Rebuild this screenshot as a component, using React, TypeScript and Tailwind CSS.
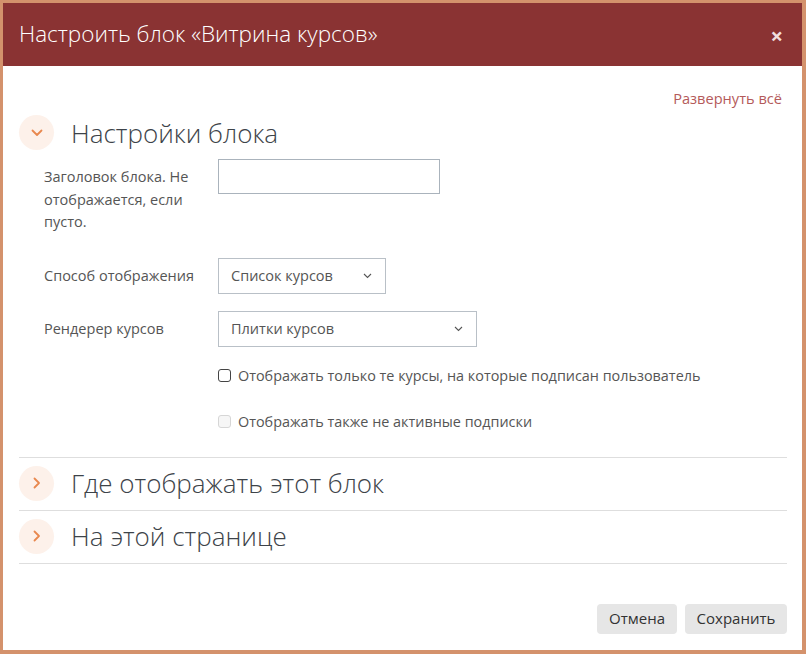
import React from 'react';

const ChevronDown = ({ className = '' }: { className?: string }) => (
  <svg width="12" height="8" viewBox="0 0 12 8" className={className} fill="none">
    <path d="M1.5 1.5 L6 6 L10.5 1.5" stroke="currentColor" strokeWidth="1.8" strokeLinecap="round" strokeLinejoin="round" />
  </svg>
);

const ChevronRight = ({ className = '' }: { className?: string }) => (
  <svg width="8" height="12" viewBox="0 0 8 12" className={className} fill="none">
    <path d="M1.5 1.5 L6 6 L1.5 10.5" stroke="currentColor" strokeWidth="1.8" strokeLinecap="round" strokeLinejoin="round" />
  </svg>
);

const SmallCaret = () => (
  <svg width="9" height="6" viewBox="0 0 9 6" fill="none">
    <path d="M1 1 L4.5 4.5 L8 1" stroke="#555" strokeWidth="1.1" />
  </svg>
);

const SectionHeader = ({ title, open }: { title: string; open?: boolean }) => (
  <div className="flex items-center">
    <div className="w-[35px] h-[35px] rounded-full bg-[#fdf1ea] flex items-center justify-center text-[#e8884f]">
      {open ? <ChevronDown /> : <ChevronRight />}
    </div>
    <h3 className="ml-[17px] text-[26px] leading-[32px] font-light text-[#3d4349]">{title}</h3>
  </div>
);

const Select = ({ value, width }: { value: string; width: string }) => (
  <div className={`${width} h-[36px] border border-[#b9c0c7] flex items-center justify-between pl-[12px] pr-[13px] text-[14.5px] text-[#555]`}>
    <span>{value}</span>
    <SmallCaret />
  </div>
);

const Checkbox = ({ label, disabled }: { label: string; disabled?: boolean }) => (
  <label className="flex items-center gap-[7px] text-[14.4px] text-[#555]">
    <span className={`w-[13px] h-[13px] rounded-[3px] border ${disabled ? 'border-[#d6d6d6] bg-[#f6f6f6]' : 'border-[#444] bg-white'}`} />
    <span>{label}</span>
  </label>
);

export default function App() {
  return (
    <div className="w-[806px] h-[654px] bg-[#d4926c] pt-[3px] pl-[3px] pr-[4px] pb-[4px]" style={{ fontFamily: '"Open Sans", "Liberation Sans", sans-serif' }}>
      <div className="w-full h-full bg-white flex flex-col">
        <div className="h-[63px] bg-[#8a3333] flex items-center justify-between pl-[16px] pr-[19px] shrink-0">
          <h2 className="text-[22.5px] font-light text-white leading-none">Настроить блок «Витрина курсов»</h2>
          <span className="text-[22px] font-bold text-[#f0dede] leading-none">×</span>
        </div>

        <div className="pl-[16px] pr-[15px] pt-[22px] flex-1 flex flex-col">
          <div className="flex justify-end pr-[5px]">
            <span className="text-[14.6px] leading-[20px] text-[#b45a5a]">Развернуть всё</span>
          </div>

          <div className="mt-[7px]">
            <SectionHeader title="Настройки блока" open />
          </div>

          <div className="mt-[9px]">
            <div className="flex">
              <div className="w-[199px] pl-[25px] pr-[16px] pt-[7px] text-[14.5px] leading-[22.5px] text-[#555]">
                Заголовок блока. Не отображается, если пусто.
              </div>
              <div className="w-[222px] h-[35px] border border-[#aab3bc]" />
            </div>

            <div className="flex items-center mt-[24px]">
              <div className="w-[199px] pl-[25px] text-[14.5px] text-[#555]">Способ отображения</div>
              <Select value="Список курсов" width="w-[168px]" />
            </div>

            <div className="flex items-center mt-[17px]">
              <div className="w-[199px] pl-[25px] text-[14.5px] text-[#555]">Рендерер курсов</div>
              <Select value="Плитки курсов" width="w-[259px]" />
            </div>

            <div className="pl-[199px] mt-[18px] flex flex-col gap-[25px]">
              <Checkbox label="Отображать только те курсы, на которые подписан пользователь" />
              <Checkbox label="Отображать также не активные подписки" disabled />
            </div>
          </div>

          <div className="mt-[24px] border-t border-[#dedede]" />
          <div className="pt-[8px] pb-[9px]">
            <SectionHeader title="Где отображать этот блок" />
          </div>
          <div className="border-t border-[#dedede]" />
          <div className="pt-[8px] pb-[9px]">
            <SectionHeader title="На этой странице" />
          </div>
          <div className="border-t border-[#dedede]" />

          <div className="mt-[40px] flex justify-end gap-[8px]">
            <button className="h-[30px] w-[80px] rounded-[4px] bg-[#e6e6e6] text-[15px] text-[#333]">Отмена</button>
            <button className="h-[30px] w-[102px] rounded-[4px] bg-[#e6e6e6] text-[15px] text-[#333]">Сохранить</button>
          </div>
        </div>
      </div>
    </div>
  );
}
